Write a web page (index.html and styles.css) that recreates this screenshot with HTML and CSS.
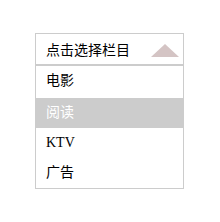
FILE: index.html
```html
<!DOCTYPE html>
<html lang="zh-CN">
<head>
    <meta charset="UTF-8">
    <title>选择栏目</title>
    <link rel="stylesheet" href="styles.css">
</head>
<body>

    <div class="select-box">
        <div class="select-head">
            <span class="select-title">点击选择栏目</span>
            <span class="arrow"></span>
        </div>
        <ul class="select-list">
            <li class="first">电影</li>
            <li class="active">阅读</li>
            <li>KTV</li>
            <li>广告</li>
        </ul>
    </div>

</body>
</html>
```

FILE: styles.css
```css
* {
    margin: 0;
    padding: 0;
    box-sizing: border-box;
}

body {
    background: #fff;
    font-family: "Liberation Serif", "Noto Sans CJK SC", serif;
    font-size: 14px;
    color: #000;
}

.select-box {
    margin: 33px 0 0 35px;
    width: 149px;
    border: 1px solid #ccc;
}

.select-head {
    display: flex;
    align-items: center;
    justify-content: space-between;
    height: 32px;
    padding: 0 4px 0 10px;
    border-bottom: 2px solid #ccc;
}

.arrow {
    width: 0;
    height: 0;
    border-left: 14px solid transparent;
    border-right: 14px solid transparent;
    border-bottom: 13px solid #d4c4c4;
    margin-top: 2px;
}

.select-list {
    list-style: none;
}

.select-list li {
    height: 30px;
    line-height: 30px;
    padding-left: 10px;
}

.select-list li.first {
    height: 32px;
}

.select-list li.active {
    background: #ccc;
    color: #fff;
}
```
